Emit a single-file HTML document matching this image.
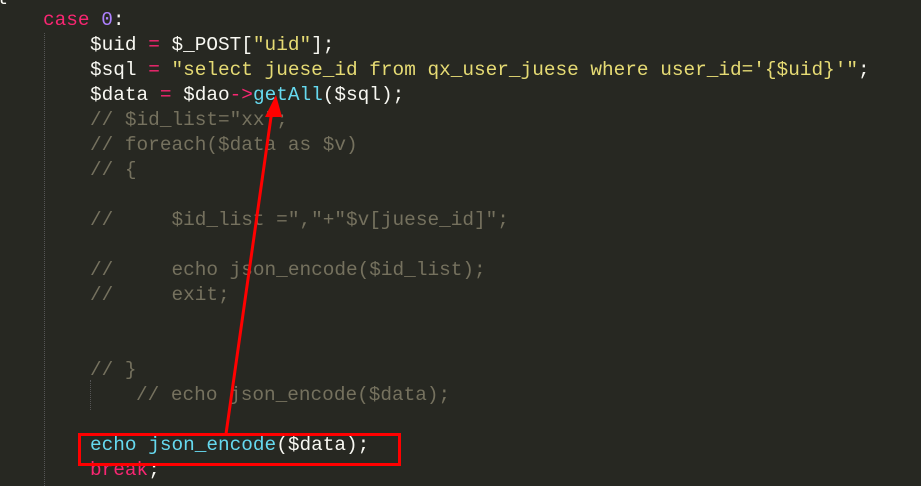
<!DOCTYPE html><html><head><style>
body{margin:0;width:921px;height:486px;background:#272822;overflow:hidden;position:relative;font-family:"Liberation Mono",monospace;font-size:19.4px;color:#f8f8f2}
.l{position:absolute;white-space:pre;line-height:25px;height:25px}
.k{color:#f92672}.n{color:#ae81ff}.s{color:#e6db74}.c{color:#75715e}.b{color:#66d9ef}
.g{position:absolute;border-left:1px dotted #555;width:0}
</style></head><body>
<div class="l" style="left:-4px;top:-17px">{</div>
<div class="g" style="left:44px;top:33px;height:453px"></div>
<div class="g" style="left:90px;top:380px;height:30px"></div>
<div class="l" style="left:43px;top:8px"><span class="k">case</span> <span class="n">0</span>:</div>
<div class="l" style="left:90px;top:33px">$uid <span class="k">=</span> $_POST[<span class="s">"uid"</span>];</div>
<div class="l" style="left:90px;top:58px">$sql <span class="k">=</span> <span class="s">"select juese_id from qx_user_juese where user_id='{$uid}'"</span>;</div>
<div class="l" style="left:90px;top:83px">$data <span class="k">=</span> $dao<span class="k">-&gt;</span><span class="b">getAll</span>($sql);</div>
<div class="l c" style="left:90px;top:108px">// $id_list="xx";</div>
<div class="l c" style="left:90px;top:133px">// foreach($data as $v)</div>
<div class="l c" style="left:90px;top:158px">// {</div>
<div class="l c" style="left:90px;top:208px">//     $id_list =","+"$v[juese_id]";</div>
<div class="l c" style="left:90px;top:258px">//     echo json_encode($id_list);</div>
<div class="l c" style="left:90px;top:283px">//     exit;</div>
<div class="l c" style="left:90px;top:358px">// }</div>
<div class="l c" style="left:136px;top:383px">// echo json_encode($data);</div>
<div class="l" style="left:90px;top:433px"><span class="b">echo</span> <span class="b">json_encode</span>($data);</div>
<div class="l k" style="left:90px;top:458px">break<span style="color:#f8f8f2">;</span></div>
<div style="position:absolute;left:78px;top:433px;width:317px;height:27px;border:3px solid #f00"></div>
<svg style="position:absolute;left:0;top:0" width="921" height="486"><line x1="226" y1="434" x2="272" y2="110" stroke="#f00" stroke-width="3"/><polygon points="276,95 265,117 282,117" fill="#f00"/></svg>
</body></html>
